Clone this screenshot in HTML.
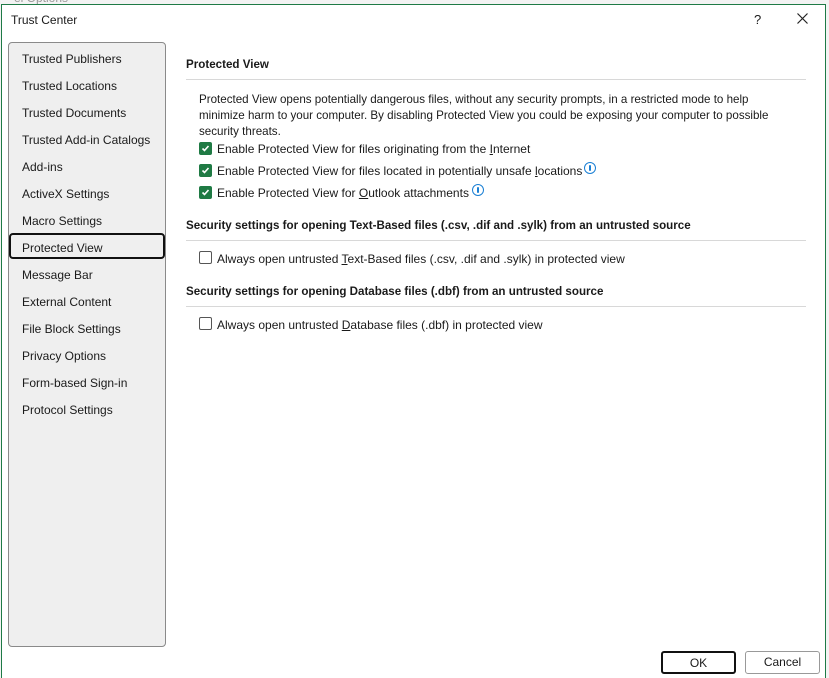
<!DOCTYPE html>
<html><head><meta charset="utf-8"><style>
*{margin:0;padding:0;box-sizing:border-box}
html{width:829px;height:678px;overflow:hidden}
body{width:829px;height:678px;overflow:hidden;background:#f3f3f3;font-family:"Segoe UI","Liberation Sans",sans-serif;font-size:12px;color:#1a1a1a;position:relative}
.bgtxt{position:absolute;left:14px;top:-9px;color:#999;font-size:12px}
.dlg{position:absolute;left:1px;top:4px;width:825px;height:674px;background:#fff;border:1px solid #1e7a46;border-bottom:none}
.t{position:absolute;white-space:nowrap;transform:translateY(3px)}
.nav{position:absolute;left:8px;top:42px;width:158px;height:605px;background:#efefef;border:1px solid #8a8a8a;border-radius:4px}
.sel{position:absolute;left:9px;top:233px;width:156px;height:26px;border:2px solid #111;border-radius:4px}
.h{font-weight:bold;font-size:11.6px}
.line{position:absolute;left:186px;width:620px;height:1px;background:#d8d8d8}
.cb{position:absolute;width:13px;height:13px;border-radius:2px;background:#1f7a44}
.cb svg{position:absolute;left:1px;top:1px}
.ub{position:absolute;width:13px;height:13px;border:1px solid #555;border-radius:2px;background:#fff}
.info{position:absolute;width:12px;height:12px;border:1.5px solid #1a7fd4;border-radius:50%}
.info:after{content:"";position:absolute;left:3.5px;top:1.5px;width:2px;height:6px;background:#1a7fd4;border-radius:1px}
.btn{position:absolute;top:651px;height:23px;text-align:center;line-height:21px;font-size:12px;border-radius:3px;background:#fff}
u{text-decoration:underline}
</style></head><body>
<div class="bgtxt">el Options</div>
<div class="dlg"></div>
<div class="t" style="left:11px;top:10px;font-size:12px">Trust Center</div>
<div class="t" style="left:754px;top:9px;font-size:13px">?</div>
<svg style="position:absolute;left:797px;top:13px" width="11" height="11"><path d="M0.5 0.5L10.5 10.5M10.5 0.5L0.5 10.5" stroke="#222" stroke-width="1.2"/></svg>
<div class="nav"></div>
<div class="sel"></div>
<div class="t" style="left:22px;top:49px">Trusted Publishers</div>
<div class="t" style="left:22px;top:76px">Trusted Locations</div>
<div class="t" style="left:22px;top:103px">Trusted Documents</div>
<div class="t" style="left:22px;top:130px">Trusted Add-in Catalogs</div>
<div class="t" style="left:22px;top:157px">Add-ins</div>
<div class="t" style="left:22px;top:184px">ActiveX Settings</div>
<div class="t" style="left:22px;top:211px">Macro Settings</div>
<div class="t" style="left:22px;top:238px">Protected View</div>
<div class="t" style="left:22px;top:265px">Message Bar</div>
<div class="t" style="left:22px;top:292px">External Content</div>
<div class="t" style="left:22px;top:319px">File Block Settings</div>
<div class="t" style="left:22px;top:346px">Privacy Options</div>
<div class="t" style="left:22px;top:373px">Form-based Sign-in</div>
<div class="t" style="left:22px;top:400px">Protocol Settings</div>

<div class="t h" style="left:186px;top:55px">Protected View</div>
<div class="line" style="top:79px"></div>
<div class="t" style="left:199px;top:89px;line-height:16px;font-size:11.6px">Protected View opens potentially dangerous files, without any security prompts, in a restricted mode to help<br>minimize harm to your computer. By disabling Protected View you could be exposing your computer to possible<br>security threats.</div>
<div class="cb" style="left:199px;top:142px"><svg width="11" height="11"><path d="M2.5 5.5L4.5 7.5L8.5 3" stroke="#fff" stroke-width="1.6" fill="none"/></svg></div>
<div class="t" style="left:217px;top:139px">Enable Protected View for files originating from the <u>I</u>nternet</div>
<div class="cb" style="left:199px;top:164px"><svg width="11" height="11"><path d="M2.5 5.5L4.5 7.5L8.5 3" stroke="#fff" stroke-width="1.6" fill="none"/></svg></div>
<div class="t" style="left:217px;top:161px">Enable Protected View for files located in potentially unsafe <u>l</u>ocations</div>
<div class="info" style="left:584px;top:162px"></div>
<div class="cb" style="left:199px;top:186px"><svg width="11" height="11"><path d="M2.5 5.5L4.5 7.5L8.5 3" stroke="#fff" stroke-width="1.6" fill="none"/></svg></div>
<div class="t" style="left:217px;top:183px">Enable Protected View for <u>O</u>utlook attachments</div>
<div class="info" style="left:472px;top:184px"></div>

<div class="t h" style="left:186px;top:216px">Security settings for opening Text-Based files (.csv, .dif and .sylk) from an untrusted source</div>
<div class="line" style="top:240px"></div>
<div class="ub" style="left:199px;top:251px"></div>
<div class="t" style="left:217px;top:249px">Always open untrusted <u>T</u>ext-Based files (.csv, .dif and .sylk) in protected view</div>
<div class="t h" style="left:186px;top:282px">Security settings for opening Database files (.dbf) from an untrusted source</div>
<div class="line" style="top:306px"></div>
<div class="ub" style="left:199px;top:317px"></div>
<div class="t" style="left:217px;top:315px">Always open untrusted <u>D</u>atabase files (.dbf) in protected view</div>

<div class="btn" style="left:661px;width:75px;border:2px solid #111;line-height:19px;padding-top:1px">OK</div>
<div class="btn" style="left:745px;width:75px;border:1px solid #999">Cancel</div>
</body></html>
